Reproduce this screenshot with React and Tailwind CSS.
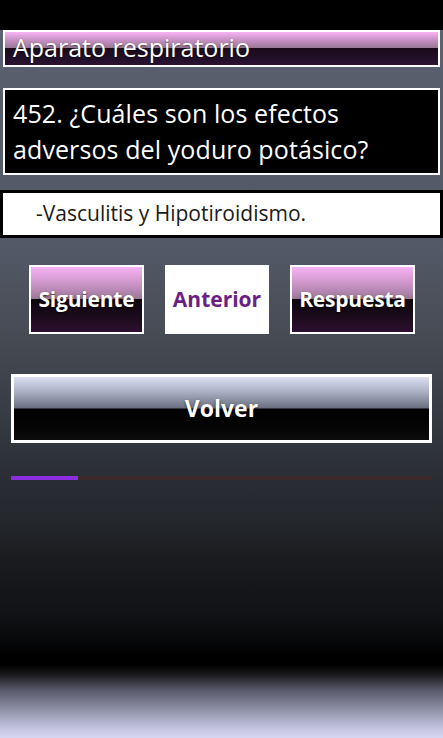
import React from 'react';

const pinkFace =
  'bg-[linear-gradient(180deg,#f8b2f4_0%,#c48fc0_30%,#9a7896_49%,#0e060e_50%,#1a0a1a_75%,#2e1030_100%)]';

function PinkButton({ label, width }) {
  return (
    <div
      className={`${width} h-[69px] border-2 border-white ${pinkFace} flex items-center justify-center text-white font-bold text-[21px] tracking-[-0.2px] [text-shadow:0_1px_2px_rgba(0,0,0,0.8)]`}
    >
      {label}
    </div>
  );
}

export default function App() {
  const progress = 16;

  return (
    <div className="w-[443px] h-[738px] flex flex-col font-['Open_Sans',sans-serif] overflow-hidden">
      {/* status bar */}
      <div className="h-[30px] bg-black shrink-0" />

      <div className="flex-1 flex flex-col bg-[linear-gradient(180deg,#5c6272_0px,#575d6b_60px,#525866_220px,#484c55_300px,#3a3e46_370px,#2a2e34_450px,#22252a_500px,#1a1b1e_530px,#121316_580px,#08090b_610px,#000000_625px,#000000_635px,#1a1a1e_645px,#58596a_660px,#9092a8_680px,#c8c8e4_700px,#d6d6f0_708px)]">
        {/* category header */}
        <div className="mx-[3px] h-[37px] border-2 border-white bg-[linear-gradient(180deg,#f8b4f4_0%,#c690c2_25%,#9c7a98_47%,#1a0a1a_50%,#22102a_80%,#2e1232_100%)] flex items-center pl-[8px]">
          <span className="text-white text-[25px] leading-none [text-shadow:0_1px_2px_rgba(0,0,0,0.6)] -mt-[2px]">
            Aparato respiratorio
          </span>
        </div>

        {/* question */}
        <div className="mx-[3px] mt-[21px] h-[87px] border-2 border-white bg-black px-[8px] pt-[5px]">
          <p className="text-white text-[25px] leading-[36px] tracking-[0.1px]">
            452. ¿Cuáles son los efectos adversos del yoduro potásico?
          </p>
        </div>

        {/* answer */}
        <div className="mt-[15px] h-[48px] border-[3px] border-black bg-white flex items-center pl-[33px]">
          <span className="text-[#1a1a1a] text-[21px]">-Vasculitis y Hipotiroidismo.</span>
        </div>

        {/* nav buttons */}
        <div className="mt-[27px] flex pl-[29px] gap-[21px]">
          <PinkButton label="Siguiente" width="w-[115px]" />
          <div className="w-[104px] h-[69px] bg-white flex items-center justify-center text-[#6b1f86] font-bold text-[21px]">
            Anterior
          </div>
          <PinkButton label="Respuesta" width="w-[125px]" />
        </div>

        {/* back */}
        <div className="mx-[11px] mt-[40px] h-[69px] border-[3px] border-white bg-[linear-gradient(180deg,#dcdff2_0%,#a8acc0_25%,#6a7080_49%,#000000_51%,#050505_80%,#0c0c0e_100%)] flex items-center justify-center text-white font-bold text-[23px] [text-shadow:0_1px_2px_rgba(0,0,0,0.8)]">
          Volver
        </div>

        {/* progress */}
        <div className="mx-[11px] mt-[33px] h-[4px] bg-[#3a2a2c] flex">
          <div className="h-full bg-[#8a2ee0]" style={{ width: `${progress}%` }} />
        </div>
      </div>
    </div>
  );
}
